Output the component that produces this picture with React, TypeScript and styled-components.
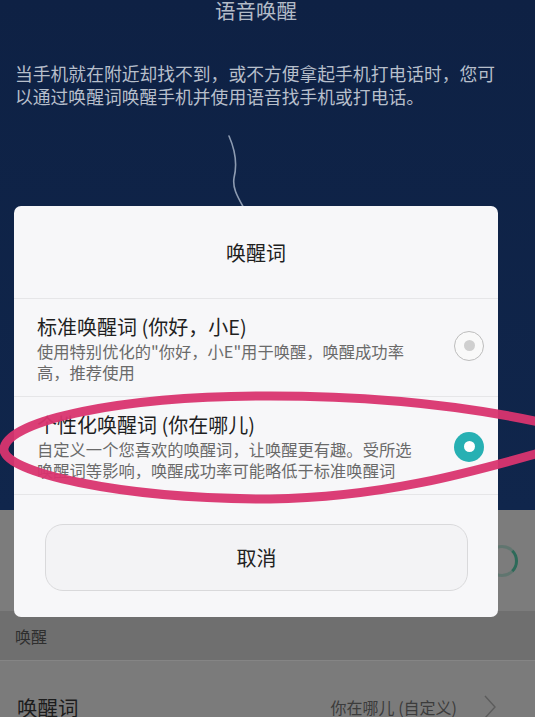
import React from "react";
import styled, { createGlobalStyle } from "styled-components";

const GlobalStyle = createGlobalStyle`
  html, body {
    margin: 0;
    padding: 0;
    background: #7b7b7b;
  }
  body {
    font-family: "Noto Sans CJK SC", "Noto Sans", sans-serif;
  }
`;

interface Option {
  title: string;
  lines: string[];
  checked: boolean;
}

const options: Option[] = [
  {
    title: "标准唤醒词 (你好，小E)",
    lines: ['使用特别优化的"你好，小E"用于唤醒，唤醒成功率', "高，推荐使用"],
    checked: false,
  },
  {
    title: "个性化唤醒词 (你在哪儿)",
    lines: [
      "自定义一个您喜欢的唤醒词，让唤醒更有趣。受所选",
      "唤醒词等影响，唤醒成功率可能略低于标准唤醒词",
    ],
    checked: true,
  },
];

const App = () => {
  return (
    <Page>
      <GlobalStyle />
      <Hero>
        <HeroTitle>语音唤醒</HeroTitle>
        <HeroText>
          当手机就在附近却找不到，或不方便拿起手机打电话时，您可以通过唤醒词唤醒手机并使用语音找手机或打电话。
        </HeroText>
        <Wave width="40" height="80" viewBox="0 0 40 80">
          <path
            d="M9 2 C 16 18, 17 32, 14 44 C 12 56, 20 66, 27 80"
            fill="none"
            stroke="#8d9bb1"
            strokeWidth="1.6"
            strokeLinecap="round"
          />
        </Wave>
      </Hero>

      <List>
        <SwitchRow>
          <RowLabel>语音唤醒</RowLabel>
          <Knob />
        </SwitchRow>
        <SectionHeader>唤醒</SectionHeader>
        <ItemRow>
          <ItemLabel>唤醒词</ItemLabel>
          <ItemValue>
            你在哪儿 (自定义)
            <svg width="14" height="26" viewBox="0 0 14 26">
              <path
                d="M2 2 L12 13 L2 24"
                fill="none"
                stroke="#5c5c5c"
                strokeWidth="1.4"
              />
            </svg>
          </ItemValue>
        </ItemRow>
      </List>

      <Dialog>
        <DialogTitle>唤醒词</DialogTitle>
        {options.map((o) => (
          <OptionRow key={o.title}>
            <OptionText>
              <OptionTitle>{o.title}</OptionTitle>
              <OptionDesc>
                {o.lines.map((l) => (
                  <span key={l}>{l}</span>
                ))}
              </OptionDesc>
            </OptionText>
            <Radio checked={o.checked} />
          </OptionRow>
        ))}
        <Footer>
          <CancelButton>取消</CancelButton>
        </Footer>
      </Dialog>

      <Annotation width="535" height="717" viewBox="0 0 535 717">
        <path
          d="M600 437 C 540 420, 430 396, 270 396 C 120 396, 10 420, 4 448 C 0 472, 120 499, 270 499 C 420 497, 530 452, 600 437"
          fill="none"
          stroke="#d9346f"
          strokeWidth="9"
          strokeLinecap="round"
          opacity="0.95"
        />
      </Annotation>
    </Page>
  );
};

export default App;

const Page = styled.div`
  position: relative;
  width: 535px;
  height: 717px;
  overflow: hidden;
  background: #7b7b7b;
`;

const Hero = styled.div`
  height: 510px;
  box-sizing: border-box;
  background: linear-gradient(180deg, #0e2144 0%, #10264c 100%);
  display: flex;
  flex-direction: column;
`;

const HeroTitle = styled.div`
  padding-right: 23px;
  margin-top: -2px;
  text-align: center;
  font-size: 20.5px;
  line-height: 24px;
  color: #b3bbc7;
`;

const HeroText = styled.p`
  margin: 40px 0 0;
  padding: 0 35px 0 15px;
  font-size: 17.8px;
  line-height: 23px;
  color: #b7bfcb;
`;

const Wave = styled.svg`
  display: block;
  margin: 26px 0 0 220px;
`;

const List = styled.div`
  display: flex;
  flex-direction: column;
`;

const SwitchRow = styled.div`
  height: 101px;
  display: flex;
  align-items: center;
  justify-content: space-between;
  padding: 0 17px 0 15px;
  background: #7c7c7c;
`;

const RowLabel = styled.span`
  font-size: 20px;
  color: #222;
`;

const Knob = styled.div`
  width: 26px;
  height: 26px;
  border-radius: 50%;
  border: 3px solid transparent;
  border-right-color: #2d6a59;
  border-top-color: rgba(45, 106, 89, 0.35);
  border-bottom-color: rgba(45, 106, 89, 0.35);
`;

const SectionHeader = styled.div`
  height: 49px;
  display: flex;
  align-items: center;
  padding: 0 15px;
  background: #6f6f6f;
  border-bottom: 1px solid #858585;
  font-size: 16px;
  color: #2e2e2e;
`;

const ItemRow = styled.div`
  height: 92px;
  display: flex;
  align-items: center;
  justify-content: space-between;
  padding: 0 38px 0 17px;
  background: #7b7b7b;
`;

const ItemLabel = styled.span`
  font-size: 20.5px;
  color: #1c1c1c;
`;

const ItemValue = styled.span`
  display: flex;
  align-items: center;
  gap: 26px;
  font-size: 16px;
  color: #3c3c3c;
`;

const Dialog = styled.div`
  position: absolute;
  top: 206px;
  left: 14px;
  width: 484px;
  height: 411px;
  border-radius: 7px;
  background: #f7f7f9;
  display: flex;
  flex-direction: column;
  overflow: hidden;
`;

const DialogTitle = styled.div`
  height: 92px;
  display: flex;
  align-items: center;
  justify-content: center;
  font-size: 20px;
  color: #202020;
  border-bottom: 1px solid #e6e6e8;
`;

const OptionRow = styled.div`
  height: 97px;
  display: flex;
  align-items: center;
  justify-content: space-between;
  padding: 0 14px 0 23px;
  border-bottom: 1px solid #e6e6e8;
`;

const OptionText = styled.div`
  display: flex;
  flex-direction: column;
`;

const OptionTitle = styled.div`
  font-size: 20px;
  line-height: 27px;
  color: #1f1f1f;
`;

const OptionDesc = styled.div`
  display: flex;
  flex-direction: column;
  margin-top: 1px;
  font-size: 16.3px;
  line-height: 21px;
  color: #6a6a6a;
`;

const Radio = styled.div<{ checked: boolean }>`
  flex: none;
  width: 30px;
  height: 30px;
  box-sizing: border-box;
  border-radius: 50%;
  display: flex;
  align-items: center;
  justify-content: center;
  margin-top: ${(p) => (p.checked ? "2px" : "-4px")};
  border: ${(p) => (p.checked ? "none" : "1.5px solid #bdbdbd")};
  background: ${(p) => (p.checked ? "#27b0b3" : "#f9f9f9")};

  &::after {
    content: "";
    width: 11px;
    height: 11px;
    border-radius: 50%;
    background: ${(p) => (p.checked ? "#ffffff" : "#cfcfcf")};
  }
`;

const Footer = styled.div`
  flex: 1;
  padding: 29px 30px 0 31px;
`;

const CancelButton = styled.button`
  width: 100%;
  height: 67px;
  border: 1px solid #d9d9db;
  border-radius: 18px;
  background: #f3f3f5;
  font-family: inherit;
  font-size: 20px;
  color: #222;
`;

const Annotation = styled.svg`
  position: absolute;
  top: 0;
  left: 0;
  pointer-events: none;
`;
